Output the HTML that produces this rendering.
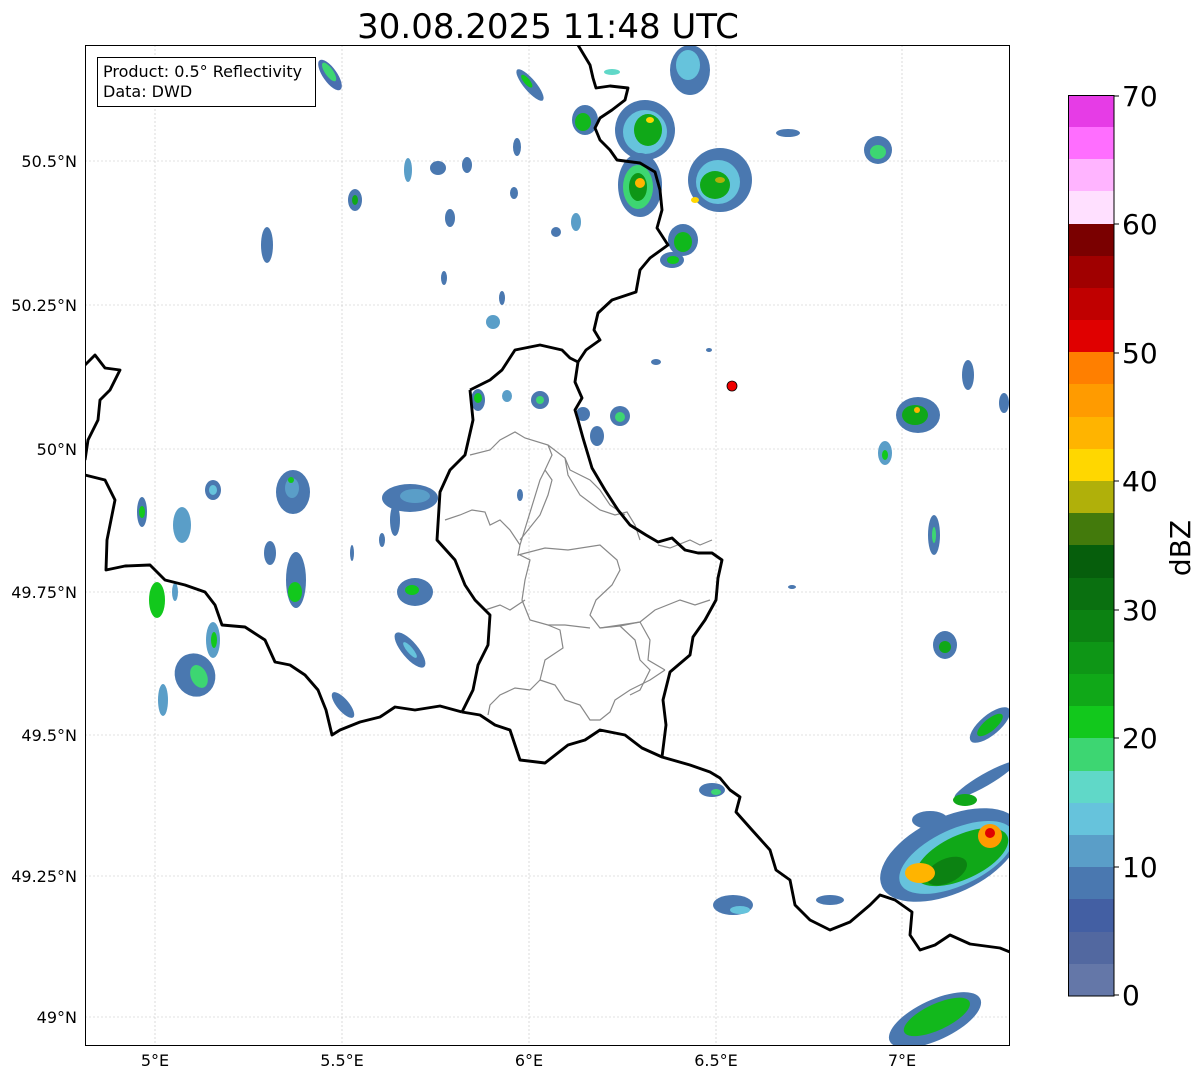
<!DOCTYPE html>
<html><head><meta charset="utf-8"><style>
html,body{margin:0;padding:0;background:#fff;}
svg{display:block;font-family:"DejaVu Sans","Liberation Sans",sans-serif;}
</style></head><body>
<svg width="1202" height="1081" viewBox="0 0 1202 1081" xmlns="http://www.w3.org/2000/svg">
<rect width="1202" height="1081" fill="#fff"/>
<text x="548" y="38" font-size="34" text-anchor="middle">30.08.2025 11:48 UTC</text>
<defs><clipPath id="c"><rect x="85" y="45" width="925" height="1001"/></clipPath></defs>
<g clip-path="url(#c)">
<g stroke="#c4c4c4" stroke-width="0.6" stroke-dasharray="2,2">
<line x1="155" y1="45" x2="155" y2="1046"/><line x1="342" y1="45" x2="342" y2="1046"/><line x1="529" y1="45" x2="529" y2="1046"/><line x1="716" y1="45" x2="716" y2="1046"/><line x1="902" y1="45" x2="902" y2="1046"/>
<line x1="85" y1="161" x2="1010" y2="161"/><line x1="85" y1="305" x2="1010" y2="305"/><line x1="85" y1="449" x2="1010" y2="449"/><line x1="85" y1="592" x2="1010" y2="592"/><line x1="85" y1="735" x2="1010" y2="735"/><line x1="85" y1="876" x2="1010" y2="876"/><line x1="85" y1="1017" x2="1010" y2="1017"/>
</g>
<g>
<g transform="rotate(-35 330 75)"><ellipse cx="330" cy="75" rx="7" ry="18" fill="#4a6fb0"/><ellipse cx="331" cy="72" rx="4" ry="11" fill="#3dd672"/></g>
<g transform="rotate(-40 530 85)"><ellipse cx="530" cy="85" rx="6" ry="20" fill="#4a78b0"/><ellipse cx="530" cy="80" rx="3" ry="8" fill="#12c81c"/></g>
<ellipse cx="690" cy="70" rx="20" ry="25" fill="#4a78b0"/><ellipse cx="688" cy="65" rx="12" ry="15" fill="#66c3dc"/>
<ellipse cx="585" cy="120" rx="13" ry="15" fill="#4a78b0"/><ellipse cx="583" cy="122" rx="8" ry="9" fill="#12b81c"/>
<ellipse cx="645" cy="130" rx="30" ry="30" fill="#4a78b0"/><ellipse cx="645" cy="132" rx="22" ry="22" fill="#66c3dc"/><ellipse cx="648" cy="130" rx="14" ry="16" fill="#10a818"/><ellipse cx="650" cy="120" rx="4" ry="3" fill="#ffd700"/>
<ellipse cx="640" cy="185" rx="22" ry="32" fill="#4a78b0"/><ellipse cx="638" cy="187" rx="15" ry="22" fill="#3dd672"/><ellipse cx="638" cy="187" rx="9" ry="14" fill="#0e9616"/><ellipse cx="640" cy="183" rx="5" ry="5" fill="#ffb400"/>
<ellipse cx="720" cy="180" rx="32" ry="32" fill="#4a78b0"/><ellipse cx="718" cy="182" rx="22" ry="22" fill="#66c3dc"/><ellipse cx="715" cy="185" rx="15" ry="14" fill="#10a818"/><ellipse cx="720" cy="180" rx="5" ry="3" fill="#b0b00a"/><ellipse cx="695" cy="200" rx="4" ry="3" fill="#ffd700"/>
<ellipse cx="683" cy="240" rx="15" ry="16" fill="#4a78b0"/><ellipse cx="683" cy="242" rx="9" ry="10" fill="#10b81c"/>
<ellipse cx="672" cy="260" rx="12" ry="8" fill="#4a78b0"/><ellipse cx="673" cy="260" rx="6" ry="4" fill="#12c81c"/>
<ellipse cx="788" cy="133" rx="12" ry="4" fill="#4a78b0"/><ellipse cx="878" cy="150" rx="14" ry="14" fill="#4a78b0"/><ellipse cx="878" cy="152" rx="8" ry="7" fill="#3dd672"/>
<ellipse cx="612" cy="72" rx="8" ry="3" fill="#60d8c8"/>
<ellipse cx="355" cy="200" rx="7" ry="11" fill="#4a78b0"/><ellipse cx="355" cy="200" rx="3" ry="5" fill="#10a818"/>
<ellipse cx="267" cy="245" rx="6" ry="18" fill="#4a78b0"/>
<ellipse cx="408" cy="170" rx="4" ry="12" fill="#5a9ec8"/><ellipse cx="438" cy="168" rx="8" ry="7" fill="#4a78b0"/><ellipse cx="467" cy="165" rx="5" ry="8" fill="#4a78b0"/>
<ellipse cx="517" cy="147" rx="4" ry="9" fill="#4a78b0"/><ellipse cx="450" cy="218" rx="5" ry="9" fill="#4a78b0"/><ellipse cx="514" cy="193" rx="4" ry="6" fill="#4a78b0"/>
<ellipse cx="556" cy="232" rx="5" ry="5" fill="#4a78b0"/><ellipse cx="576" cy="222" rx="5" ry="9" fill="#5a9ec8"/><ellipse cx="444" cy="278" rx="3" ry="7" fill="#4a78b0"/>
<ellipse cx="502" cy="298" rx="3" ry="7" fill="#4a78b0"/><ellipse cx="493" cy="322" rx="7" ry="7" fill="#5a9ec8"/>
<ellipse cx="656" cy="362" rx="5" ry="3" fill="#4a78b0"/><ellipse cx="709" cy="350" rx="3" ry="2" fill="#4a78b0"/>
<ellipse cx="540" cy="400" rx="9" ry="9" fill="#4a78b0"/><ellipse cx="540" cy="400" rx="4" ry="4" fill="#3dd672"/>
<ellipse cx="478" cy="400" rx="7" ry="11" fill="#4a78b0"/><ellipse cx="478" cy="398" rx="4" ry="5" fill="#12c81c"/>
<ellipse cx="507" cy="396" rx="5" ry="6" fill="#5a9ec8"/>
<ellipse cx="583" cy="414" rx="7" ry="7" fill="#4a78b0"/><ellipse cx="620" cy="416" rx="10" ry="10" fill="#4a78b0"/><ellipse cx="620" cy="417" rx="5" ry="5" fill="#3dd672"/>
<ellipse cx="597" cy="436" rx="7" ry="10" fill="#4a78b0"/>
<ellipse cx="520" cy="495" rx="3" ry="6" fill="#4a78b0"/>
<ellipse cx="410" cy="498" rx="28" ry="14" fill="#4a78b0"/><ellipse cx="415" cy="496" rx="15" ry="7" fill="#5a9ec8"/><ellipse cx="395" cy="520" rx="5" ry="16" fill="#4a78b0"/>
<ellipse cx="293" cy="492" rx="17" ry="22" fill="#4a78b0"/><ellipse cx="292" cy="488" rx="7" ry="10" fill="#5a9ec8"/><ellipse cx="291" cy="480" rx="3" ry="3" fill="#12c81c"/>
<ellipse cx="213" cy="490" rx="8" ry="10" fill="#4a78b0"/><ellipse cx="213" cy="490" rx="4" ry="5" fill="#66c3dc"/>
<ellipse cx="142" cy="512" rx="5" ry="15" fill="#4a78b0"/><ellipse cx="142" cy="512" rx="3" ry="6" fill="#12c81c"/>
<ellipse cx="182" cy="525" rx="9" ry="18" fill="#5a9ec8"/>
<ellipse cx="270" cy="553" rx="6" ry="12" fill="#4a78b0"/>
<ellipse cx="296" cy="580" rx="10" ry="28" fill="#4a78b0"/><ellipse cx="295" cy="592" rx="7" ry="10" fill="#12c81c"/>
<ellipse cx="352" cy="553" rx="2" ry="8" fill="#4a78b0"/><ellipse cx="382" cy="540" rx="3" ry="7" fill="#4a78b0"/>
<ellipse cx="415" cy="592" rx="18" ry="14" fill="#4a78b0"/><ellipse cx="412" cy="590" rx="7" ry="5" fill="#12c81c"/>
<ellipse cx="157" cy="600" rx="8" ry="18" fill="#12c81c"/><ellipse cx="175" cy="592" rx="3" ry="9" fill="#5a9ec8"/>
<ellipse cx="213" cy="640" rx="7" ry="18" fill="#5a9ec8"/><ellipse cx="214" cy="640" rx="3" ry="8" fill="#12c81c"/>
<g transform="rotate(-25 195 675)"><ellipse cx="195" cy="675" rx="20" ry="22" fill="#4a78b0"/><ellipse cx="198" cy="678" rx="8" ry="12" fill="#3dd672"/></g>
<ellipse cx="163" cy="700" rx="5" ry="16" fill="#5a9ec8"/>
<g transform="rotate(-40 410 650)"><ellipse cx="410" cy="650" rx="8" ry="22" fill="#4a78b0"/><ellipse cx="410" cy="650" rx="3" ry="10" fill="#66c3dc"/></g>
<g transform="rotate(-40 343 705)"><ellipse cx="343" cy="705" rx="6" ry="16" fill="#4a78b0"/></g>
<ellipse cx="712" cy="790" rx="13" ry="7" fill="#4a78b0"/><ellipse cx="716" cy="792" rx="5" ry="3" fill="#3dd672"/>
<ellipse cx="733" cy="905" rx="20" ry="10" fill="#4a78b0"/><ellipse cx="740" cy="910" rx="10" ry="4" fill="#66c3dc"/>
<ellipse cx="792" cy="587" rx="4" ry="2" fill="#4a78b0"/>
<ellipse cx="830" cy="900" rx="14" ry="5" fill="#4a78b0"/>
<ellipse cx="918" cy="415" rx="22" ry="18" fill="#4a78b0"/><ellipse cx="915" cy="415" rx="13" ry="10" fill="#10a818"/><ellipse cx="917" cy="410" rx="3" ry="3" fill="#ffb400"/>
<ellipse cx="885" cy="453" rx="7" ry="12" fill="#5a9ec8"/><ellipse cx="885" cy="455" rx="3" ry="5" fill="#12c81c"/>
<ellipse cx="968" cy="375" rx="6" ry="15" fill="#4a78b0"/><ellipse cx="1004" cy="403" rx="5" ry="10" fill="#4a78b0"/>
<ellipse cx="934" cy="535" rx="6" ry="20" fill="#4a78b0"/><ellipse cx="934" cy="535" rx="2" ry="8" fill="#3dd672"/>
<ellipse cx="945" cy="645" rx="12" ry="14" fill="#4a78b0"/><ellipse cx="945" cy="647" rx="6" ry="6" fill="#10a818"/>
<g transform="rotate(50 990 725)"><ellipse cx="990" cy="725" rx="10" ry="25" fill="#4a78b0"/><ellipse cx="990" cy="725" rx="6" ry="16" fill="#10b81c"/></g>
<g transform="rotate(60 985 780)"><ellipse cx="985" cy="780" rx="6" ry="35" fill="#4a78b0"/></g>
<g transform="rotate(-25 950 855)"><ellipse cx="950" cy="855" rx="75" ry="38" fill="#4a78b0"/><ellipse cx="955" cy="860" rx="62" ry="28" fill="#66c3dc"/><ellipse cx="960" cy="862" rx="50" ry="22" fill="#10a818"/><ellipse cx="940" cy="868" rx="22" ry="12" fill="#0c8212"/></g>
<ellipse cx="920" cy="873" rx="15" ry="10" fill="#ffb400"/><ellipse cx="990" cy="836" rx="12" ry="12" fill="#ff9b00"/><ellipse cx="990" cy="833" rx="5" ry="5" fill="#e00000"/>
<ellipse cx="930" cy="820" rx="18" ry="9" fill="#4a78b0"/><ellipse cx="965" cy="800" rx="12" ry="6" fill="#10a818"/>
<g transform="rotate(-25 935 1020)"><ellipse cx="935" cy="1020" rx="50" ry="20" fill="#4a78b0"/><ellipse cx="938" cy="1018" rx="36" ry="13" fill="#12b81c"/></g>
</g>
<g fill="none" stroke="#888" stroke-width="1.2">
<polyline points="470,455 490,450 500,440 515,432 525,438 548,445 552,455 545,470 540,480 520,545 518,555 545,548 568,550 600,545 617,560 620,570 612,585 596,600 590,615 600,628 620,626 640,622 650,640 648,660 665,670"/>
<polyline points="548,445 565,458 570,470 590,480 600,490 610,505 625,515"/>
<polyline points="565,458 568,475 580,495 600,510 615,515 627,512 635,525 640,540"/>
<polyline points="545,470 552,480 548,495 540,515 520,540"/>
<polyline points="445,520 460,515 472,510 485,512 490,525 500,520 510,530 520,545"/>
<polyline points="520,555 530,560 525,580 522,600 530,620 548,625 565,625 590,628"/>
<polyline points="485,610 500,605 510,610 525,600"/>
<polyline points="548,625 560,630 563,648 545,660 540,680 530,690 515,688 500,695 490,705 488,715"/>
<polyline points="540,680 555,685 565,700 580,705 590,720 600,720 610,712 615,700 630,690 650,680 665,670"/>
<polyline points="620,626 635,640 640,660 650,670 640,690 630,695"/>
<polyline points="600,628 640,622 655,610 680,600 695,605 710,600"/>
<polyline points="658,545 670,548 690,540 700,545 712,540"/>
</g>
<g fill="none" stroke="#000" stroke-width="2.9" stroke-linejoin="round">
<polyline points="578,45 590,65 593,78 596,88 610,86 628,88 625,100 612,110 600,118 595,128 600,140 610,150 617,160 640,163 655,172 660,190 662,210 657,228 668,245 650,258 640,270 636,292 612,300 598,313 594,330 600,340 586,350 578,362 575,382 582,398 575,410 578,420 583,438 592,468 605,490 618,510 630,525 646,535 658,542 672,538 685,550 698,553 712,553 722,560 718,578 716,600 705,620 693,637 690,655 670,672 663,700 666,725 662,757"/>
<polyline points="470,390 490,380 502,370 515,350 540,345 562,350 570,358 578,362"/>
<polyline points="470,390 473,420 465,455 450,470 440,492 437,540 455,560 465,585 475,600 490,615 488,645 478,665 473,690 462,712"/>
<polyline points="462,712 480,715 495,725 510,730 515,745 520,760 545,763 568,745 585,740 600,730 625,735 642,748 662,757 690,765 710,772 720,778 730,790 740,797 736,812 752,830 770,850 776,870 790,880 795,905 810,920 830,930 850,922 870,905 880,895 895,900 912,912 910,935 920,950 935,945 950,935 970,944 1000,948 1010,952"/>
<polyline points="85,365 95,355 105,368 120,370 110,390 100,400 98,420 88,440 85,460"/>
<polyline points="85,475 105,480 115,500 107,540 106,570 125,566 150,565 165,580 185,585 205,592 215,605 222,625 245,627 265,640 275,662 290,665 305,675 318,690 326,710 332,735 340,730 360,722 380,717 395,707 415,710 440,706 462,712"/>
</g>
<circle cx="732" cy="386" r="5" fill="#f00000" stroke="#000" stroke-width="0.8"/>
</g>
<rect x="85.5" y="45.5" width="924" height="1000" fill="none" stroke="#000" stroke-width="1"/>
<rect x="97.5" y="57.5" width="218" height="49" fill="#fff" stroke="#000" stroke-width="1"/>
<text x="103" y="77" font-size="16">Product: 0.5° Reflectivity</text>
<text x="103" y="97" font-size="16">Data: DWD</text>
<g font-size="16" text-anchor="end">
<text x="77" y="167">50.5°N</text><text x="77" y="311">50.25°N</text><text x="77" y="455">50°N</text><text x="77" y="598">49.75°N</text><text x="77" y="741">49.5°N</text><text x="77" y="882">49.25°N</text><text x="77" y="1023">49°N</text>
</g>
<g font-size="16" text-anchor="middle">
<text x="155" y="1066">5°E</text><text x="342" y="1066">5.5°E</text><text x="529" y="1066">6°E</text><text x="716" y="1066">6.5°E</text><text x="902" y="1066">7°E</text>
</g>
<g>
<rect x="1068" y="95" width="46" height="33" fill="#e63ce6"/>
<rect x="1068" y="127" width="46" height="33" fill="#ff6eff"/>
<rect x="1068" y="159" width="46" height="33" fill="#ffb4ff"/>
<rect x="1068" y="191" width="46" height="33" fill="#ffe0ff"/>
<rect x="1068" y="224" width="46" height="33" fill="#7a0000"/>
<rect x="1068" y="256" width="46" height="33" fill="#a00000"/>
<rect x="1068" y="288" width="46" height="33" fill="#c00000"/>
<rect x="1068" y="320" width="46" height="33" fill="#e00000"/>
<rect x="1068" y="352" width="46" height="33" fill="#ff7f00"/>
<rect x="1068" y="384" width="46" height="33" fill="#ff9b00"/>
<rect x="1068" y="417" width="46" height="33" fill="#ffb400"/>
<rect x="1068" y="449" width="46" height="33" fill="#ffd700"/>
<rect x="1068" y="481" width="46" height="33" fill="#b0b00a"/>
<rect x="1068" y="513" width="46" height="33" fill="#437a0c"/>
<rect x="1068" y="545" width="46" height="33" fill="#065e0c"/>
<rect x="1068" y="578" width="46" height="33" fill="#0a7010"/>
<rect x="1068" y="610" width="46" height="33" fill="#0c8212"/>
<rect x="1068" y="642" width="46" height="33" fill="#0e9616"/>
<rect x="1068" y="674" width="46" height="33" fill="#10a818"/>
<rect x="1068" y="706" width="46" height="33" fill="#12c81c"/>
<rect x="1068" y="738" width="46" height="33" fill="#3dd672"/>
<rect x="1068" y="771" width="46" height="33" fill="#60d8c8"/>
<rect x="1068" y="803" width="46" height="33" fill="#66c3dc"/>
<rect x="1068" y="835" width="46" height="33" fill="#5a9ec8"/>
<rect x="1068" y="867" width="46" height="33" fill="#4a78b0"/>
<rect x="1068" y="899" width="46" height="33" fill="#435fa3"/>
<rect x="1068" y="932" width="46" height="33" fill="#5268a0"/>
<rect x="1068" y="964" width="46" height="32" fill="#6477a8"/>
<rect x="1068.5" y="95.5" width="45.5" height="900.5" fill="none" stroke="#000" stroke-width="1"/>
<g stroke="#000" stroke-width="1"><line x1="1114" y1="96" x2="1119" y2="96"/><line x1="1114" y1="224" x2="1119" y2="224"/><line x1="1114" y1="353" x2="1119" y2="353"/><line x1="1114" y1="481" x2="1119" y2="481"/><line x1="1114" y1="610" x2="1119" y2="610"/><line x1="1114" y1="738" x2="1119" y2="738"/><line x1="1114" y1="867" x2="1119" y2="867"/><line x1="1114" y1="995" x2="1119" y2="995"/></g>
<g font-size="28"><text x="1122" y="106">70</text><text x="1122" y="234">60</text><text x="1122" y="363">50</text><text x="1122" y="491">40</text><text x="1122" y="620">30</text><text x="1122" y="748">20</text><text x="1122" y="877">10</text><text x="1122" y="1005">0</text></g>
<text transform="translate(1190 548) rotate(-90)" font-size="28" text-anchor="middle">dBZ</text>
</g>
</svg>
</body></html>
